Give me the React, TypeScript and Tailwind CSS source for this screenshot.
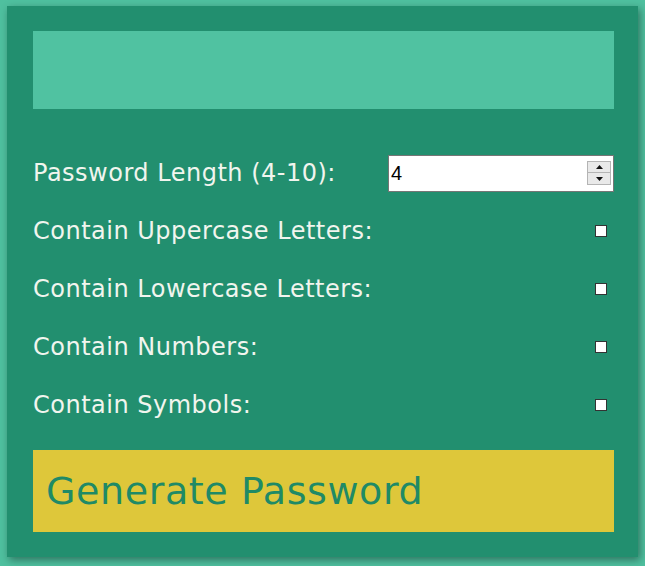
import { useState } from "react";

const options = [
  "Contain Uppercase Letters:",
  "Contain Lowercase Letters:",
  "Contain Numbers:",
  "Contain Symbols:",
];

const App = () => {
  const [length, setLength] = useState(4);
  const [checked, setChecked] = useState<boolean[]>([false, false, false, false]);

  const toggle = (i: number) => {
    setChecked((prev) => prev.map((v, j) => (j === i ? !v : v)));
  };

  const step = (d: number) => {
    setLength((prev) => Math.min(10, Math.max(4, prev + d)));
  };

  return (
    <div
      className="min-h-screen bg-[#4fc09f] pl-[7px] pt-[6px]"
      style={{ fontFamily: '"DejaVu Sans", "Noto Sans", sans-serif' }}
    >
      <div className="w-[631px] h-[551px] bg-[#228f6f] shadow-[2px_3px_8px_rgba(0,0,0,0.4)] pl-[26px] pr-[24px] pt-[25px] flex flex-col">
        {/* password output */}
        <div className="h-[78px] bg-[#50c2a1]"></div>

        <div className="mt-[35px] flex flex-col">
          <div className="h-[58px] flex items-center justify-between text-[#f1f5ee] text-[24px] tracking-[0.5px]">
            <label>Password Length (4-10):</label>
            <div className="relative">
              <input
                type="number"
                min={4}
                max={10}
                value={length}
                onChange={(e) => setLength(Number(e.target.value))}
                className="w-[226px] h-[37px] bg-white text-black text-[20px] tracking-normal border border-[#767676] pl-[2px] [appearance:textfield] [&::-webkit-inner-spin-button]:appearance-none [&::-webkit-outer-spin-button]:appearance-none"
                style={{ fontFamily: '"Liberation Sans", Arial, sans-serif' }}
              />
              <div className="absolute right-[3px] top-[7px] w-[24px] flex flex-col border border-[#b4b4b4] bg-[#e9e9e9]">
                <button
                  onClick={() => step(1)}
                  className="h-[11px] flex items-center justify-center border-b border-[#b4b4b4]"
                >
                  <svg width="7" height="4" viewBox="0 0 7 4">
                    <path d="M3.5 0 L7 4 L0 4 Z" fill="#111" />
                  </svg>
                </button>
                <button onClick={() => step(-1)} className="h-[11px] flex items-center justify-center">
                  <svg width="7" height="4" viewBox="0 0 7 4">
                    <path d="M0 0 L7 0 L3.5 4 Z" fill="#111" />
                  </svg>
                </button>
              </div>
            </div>
          </div>
          {options.map((label, i) => (
            <div
              key={label}
              className="h-[58px] flex items-center justify-between text-[#f1f5ee] text-[24px] tracking-[0.5px]"
            >
              <label>{label}</label>
              <input
                type="checkbox"
                checked={checked[i]}
                onChange={() => toggle(i)}
                className="appearance-none w-[12px] h-[12px] bg-white border-[1.5px] border-[#333] mr-[7px] checked:bg-[#333]"
              />
            </div>
          ))}
        </div>

        <button className="mt-[16px] h-[82px] bg-[#dec73a] text-[#1f8a66] text-[38px] tracking-[0.6px] text-left pl-[13px]">
          Generate Password
        </button>
      </div>
    </div>
  );
};

export default App;
